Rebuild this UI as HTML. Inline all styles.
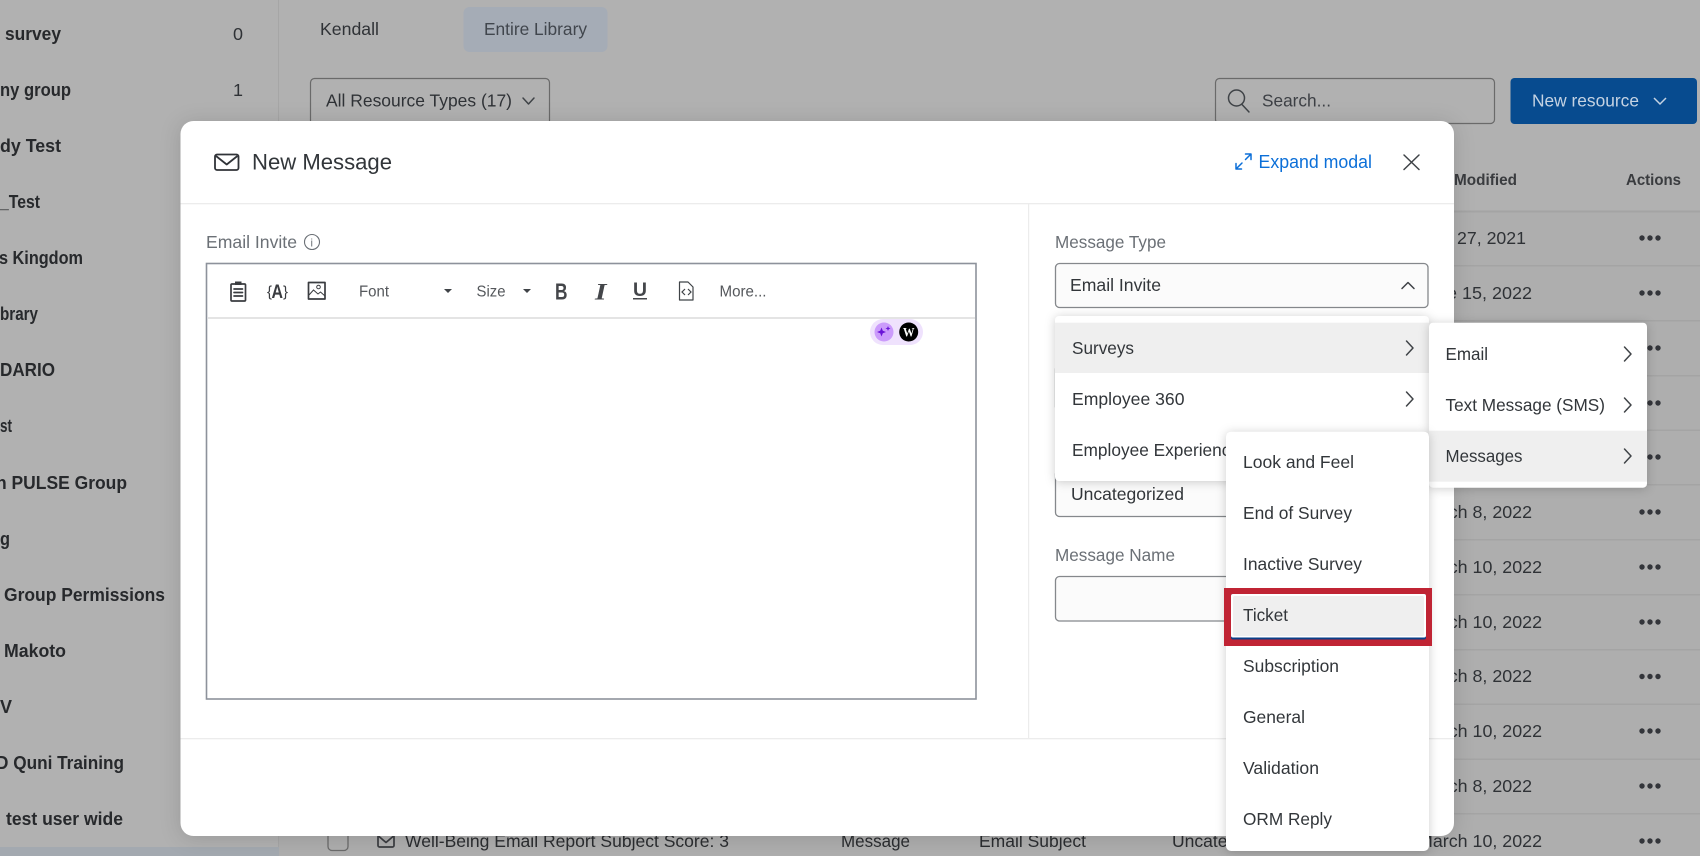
<!DOCTYPE html>
<html><head><meta charset="utf-8"><title>New Message</title>
<style>
html,body{margin:0;padding:0;width:1700px;height:856px;overflow:hidden;background:#b1b1b1}
svg{display:block;filter:blur(.3px)}
text{font-family:"Liberation Sans",sans-serif;white-space:pre}
.b{font-weight:700;font-size:18px;fill:#27292c}
.t{font-size:17.5px;fill:#2f3236}
.bg{font-size:17.5px;fill:#2b2d30}
.h{font-weight:700;font-size:15.5px;fill:#3a3c3f}
.l{font-size:17.5px;fill:#6b7076}
.m{font-size:17.5px;fill:#32363a}
.tb{font-size:15.5px;fill:#55585c}
.i{fill:none;stroke:#3a3c40;stroke-width:1.7;stroke-linecap:round;stroke-linejoin:round}
.c{fill:none;stroke:#3f4347;stroke-width:1.5;stroke-linecap:round;stroke-linejoin:round}
.d{fill:#33353a}
.ln{fill:#a4a4a4}
.sh{filter:drop-shadow(0 1px 5px rgba(0,0,0,.2))}
</style></head><body>
<svg width="1700" height="856" viewBox="0 0 1700 856" xmlns="http://www.w3.org/2000/svg">
<rect width="1700" height="856" fill="#b1b1b1"/>
<rect x="279" y="212" width="1421" height="644" fill="#aeaeae"/>
<rect x="278" y="0" width="1" height="856" fill="#a6a6a6"/>
<rect x="0" y="847" width="279" height="9" fill="#a3a9b0"/>

<!-- sidebar -->
<text class="b" x="5" y="40" textLength="56" lengthAdjust="spacingAndGlyphs">survey</text>
<text class="b" x="0" y="96" textLength="71" lengthAdjust="spacingAndGlyphs">ny group</text>
<text class="b" x="0" y="152" textLength="61" lengthAdjust="spacingAndGlyphs">dy Test</text>
<text class="b" x="0" y="208" textLength="40" lengthAdjust="spacingAndGlyphs">_Test</text>
<text class="b" x="-1" y="264" textLength="84" lengthAdjust="spacingAndGlyphs">s Kingdom</text>
<text class="b" x="0" y="320" textLength="38" lengthAdjust="spacingAndGlyphs">brary</text>
<text class="b" x="0" y="376" textLength="55" lengthAdjust="spacingAndGlyphs">DARIO</text>
<text class="b" x="0" y="432" textLength="12" lengthAdjust="spacingAndGlyphs">st</text>
<text class="b" x="-4" y="489" textLength="131" lengthAdjust="spacingAndGlyphs">n PULSE Group</text>
<text class="b" x="0" y="545" textLength="10" lengthAdjust="spacingAndGlyphs">g</text>
<text class="b" x="4" y="601" textLength="161" lengthAdjust="spacingAndGlyphs">Group Permissions</text>
<text class="b" x="4" y="657" textLength="62" lengthAdjust="spacingAndGlyphs">Makoto</text>
<text class="b" x="0" y="713" textLength="12" lengthAdjust="spacingAndGlyphs">V</text>
<text class="b" x="-4" y="769" textLength="128" lengthAdjust="spacingAndGlyphs">D Quni Training</text>
<text class="b" x="6" y="825" textLength="117" lengthAdjust="spacingAndGlyphs">test user wide</text>
<text class="t" x="233" y="40" textLength="10" lengthAdjust="spacingAndGlyphs" fill="#4a4c50">0</text>
<text class="t" x="233" y="96" textLength="10" lengthAdjust="spacingAndGlyphs">1</text>

<!-- top tabs -->
<text class="t" x="320" y="35" textLength="59" lengthAdjust="spacingAndGlyphs">Kendall</text>
<rect x="463.500" y="7" width="144" height="45" rx="6" fill="#a5acb6"/>
<text class="t" x="484" y="35" textLength="103" lengthAdjust="spacingAndGlyphs" style="fill:#41464d">Entire Library</text>

<!-- filter -->
<rect x="310.500" y="78.500" width="239" height="60" rx="4" fill="none" stroke="#6a6a6a" stroke-width="1.200"/>
<text class="t" x="326" y="106.500" textLength="186" lengthAdjust="spacingAndGlyphs">All Resource Types (17)</text>
<path class="c" d="M523 98l5.500 6 5.500-6"/>

<!-- search -->
<rect x="1215.500" y="78.500" width="279" height="45" rx="4" fill="none" stroke="#6a6a6a" stroke-width="1.200"/>
<circle cx="1236.500" cy="98" r="8" class="c"/>
<path class="c" d="M1242 104.500l7 7.500"/>
<text class="t" x="1262" y="106.500" textLength="69" lengthAdjust="spacingAndGlyphs" style="fill:#3d4045">Search...</text>

<!-- new resource -->
<rect x="1510.500" y="78" width="186.500" height="46" rx="4" fill="#074b8f"/>
<text class="t" x="1532" y="106.500" textLength="107" lengthAdjust="spacingAndGlyphs" style="fill:#c5d3e3">New resource</text>
<path d="M1654 98l6 6 6-6" fill="none" stroke="#c5d3e3" stroke-width="1.500"/>

<!-- table head -->
<text class="h" x="1454" y="185" textLength="63" lengthAdjust="spacingAndGlyphs">Modified</text>
<text class="h" x="1626" y="185" textLength="55" lengthAdjust="spacingAndGlyphs">Actions</text>
<rect class="ln" x="1340" y="210.500" width="360" height="2"/>
<rect class="ln" x="1340" y="265" width="360" height="1.500"/>
<rect class="ln" x="1340" y="320" width="360" height="1.500"/>
<rect class="ln" x="1340" y="375" width="360" height="1.500"/>
<rect class="ln" x="1340" y="429.500" width="360" height="1.500"/>
<rect class="ln" x="1340" y="484" width="360" height="1.500"/>
<rect class="ln" x="1340" y="539" width="360" height="1.500"/>
<rect class="ln" x="1340" y="594" width="360" height="1.500"/>
<rect class="ln" x="1340" y="649" width="360" height="1.500"/>
<rect class="ln" x="1340" y="703.500" width="360" height="1.500"/>
<rect class="ln" x="1340" y="758.500" width="360" height="1.500"/>
<rect class="ln" x="1340" y="813" width="360" height="1.500"/>

<!-- dates -->
<text class="t" x="1457" y="244" textLength="69" lengthAdjust="spacingAndGlyphs">27, 2021</text>
<text class="t" x="1418" y="299" textLength="114" lengthAdjust="spacingAndGlyphs">June 15, 2022</text>
<text class="t" x="1418" y="518" textLength="114" lengthAdjust="spacingAndGlyphs">March 8, 2022</text>
<text class="t" x="1418" y="573" textLength="124" lengthAdjust="spacingAndGlyphs">March 10, 2022</text>
<text class="t" x="1418" y="628" textLength="124" lengthAdjust="spacingAndGlyphs">March 10, 2022</text>
<text class="t" x="1418" y="682" textLength="114" lengthAdjust="spacingAndGlyphs">March 8, 2022</text>
<text class="t" x="1418" y="737" textLength="124" lengthAdjust="spacingAndGlyphs">March 10, 2022</text>
<text class="t" x="1418" y="792" textLength="114" lengthAdjust="spacingAndGlyphs">March 8, 2022</text>
<text class="t" x="1418" y="847" textLength="124" lengthAdjust="spacingAndGlyphs">March 10, 2022</text>

<!-- dots -->
<g class="d">
<circle cx="1642" cy="238" r="2.700"/><circle cx="1650" cy="238" r="2.700"/><circle cx="1658" cy="238" r="2.700"/>
<circle cx="1642" cy="293" r="2.700"/><circle cx="1650" cy="293" r="2.700"/><circle cx="1658" cy="293" r="2.700"/>
<circle cx="1642" cy="348" r="2.700"/><circle cx="1650" cy="348" r="2.700"/><circle cx="1658" cy="348" r="2.700"/>
<circle cx="1642" cy="403" r="2.700"/><circle cx="1650" cy="403" r="2.700"/><circle cx="1658" cy="403" r="2.700"/>
<circle cx="1642" cy="457" r="2.700"/><circle cx="1650" cy="457" r="2.700"/><circle cx="1658" cy="457" r="2.700"/>
<circle cx="1642" cy="512" r="2.700"/><circle cx="1650" cy="512" r="2.700"/><circle cx="1658" cy="512" r="2.700"/>
<circle cx="1642" cy="567" r="2.700"/><circle cx="1650" cy="567" r="2.700"/><circle cx="1658" cy="567" r="2.700"/>
<circle cx="1642" cy="622" r="2.700"/><circle cx="1650" cy="622" r="2.700"/><circle cx="1658" cy="622" r="2.700"/>
<circle cx="1642" cy="676.500" r="2.700"/><circle cx="1650" cy="676.500" r="2.700"/><circle cx="1658" cy="676.500" r="2.700"/>
<circle cx="1642" cy="731" r="2.700"/><circle cx="1650" cy="731" r="2.700"/><circle cx="1658" cy="731" r="2.700"/>
<circle cx="1642" cy="786" r="2.700"/><circle cx="1650" cy="786" r="2.700"/><circle cx="1658" cy="786" r="2.700"/>
<circle cx="1642" cy="841" r="2.700"/><circle cx="1650" cy="841" r="2.700"/><circle cx="1658" cy="841" r="2.700"/>
</g>

<!-- bottom row -->
<rect x="328" y="829" width="20" height="21.500" rx="4" fill="none" stroke="#6b6b6b" stroke-width="1.300"/>
<rect x="378" y="835" width="16" height="12" rx="1.500" class="i"/>
<path class="i" d="M379 836.500l7 6 7-6"/>
<text class="bg" x="405" y="847" textLength="324" lengthAdjust="spacingAndGlyphs">Well-Being Email Report Subject Score: 3</text>
<text class="bg" x="841" y="847" textLength="69" lengthAdjust="spacingAndGlyphs">Message</text>
<text class="bg" x="979" y="847" textLength="107" lengthAdjust="spacingAndGlyphs">Email Subject</text>
<text class="bg" x="1172" y="847" textLength="113" lengthAdjust="spacingAndGlyphs">Uncategorized</text>

<!-- modal -->
<rect x="180.500" y="121" width="1273.500" height="715" rx="13" fill="#fff" style="filter:drop-shadow(0 2px 10px rgba(0,0,0,.14))"/>
<rect x="180.500" y="203" width="1273.500" height="1.300" fill="#ececec"/>
<rect x="1028" y="203" width="1.200" height="535" fill="#ececec"/>
<rect x="180.500" y="738" width="1273.500" height="1.300" fill="#ececec"/>

<!-- header -->
<rect x="215" y="154.500" width="23.500" height="15.500" rx="2" fill="none" stroke="#303338" stroke-width="1.800"/>
<path d="M216 156l10.700 8.500 10.700-8.500" fill="none" stroke="#303338" stroke-width="1.800" stroke-linejoin="round"/>
<text x="252" y="169.500" font-size="22.500" fill="#32363a" textLength="140" lengthAdjust="spacingAndGlyphs">New Message</text>
<path d="M1236 169l6-6M1245.500 159.500l5.500-5.500M1245.500 154h5.500v5.500M1236 163.500v5.500h5.500" fill="none" stroke="#0b6fd8" stroke-width="1.500" stroke-linecap="round" stroke-linejoin="round"/>
<text x="1258.500" y="168" font-size="18" fill="#0b6fd8" textLength="113.500" lengthAdjust="spacingAndGlyphs">Expand modal</text>
<path d="M1404 155l15 14.500M1419 155l-15 14.500" fill="none" stroke="#3f4347" stroke-width="1.500" stroke-linecap="round"/>

<!-- editor -->
<text class="l" x="206" y="248" textLength="91" lengthAdjust="spacingAndGlyphs">Email Invite</text>
<circle cx="312" cy="242" r="7.500" fill="none" stroke="#6b7076" stroke-width="1.100"/>
<text x="310.500" y="246.500" font-size="11" fill="#6b7076">i</text>
<rect x="206.500" y="263.500" width="769.500" height="435.500" fill="#fff" stroke="#8d929b" stroke-width="1.600"/>
<rect x="208" y="317" width="767" height="2" fill="#e4e4e4"/>

<!-- clipboard -->
<rect x="231" y="284" width="14.500" height="17" rx="1" class="i" stroke-width="1.500"/>
<rect x="235" y="281.500" width="6.500" height="3.500" fill="#3a3c40"/>
<path class="i" d="M234 289h8.500M234 292.500h8.500M234 296h8.500"/>
<!-- {A} -->
<text x="267" y="296.500" font-size="15" fill="#3a3c40" textLength="5" lengthAdjust="spacingAndGlyphs">{</text>
<text x="271.500" y="298" font-size="19" font-weight="700" fill="#3a3c40" textLength="11.500" lengthAdjust="spacingAndGlyphs">A</text>
<text x="283" y="296.500" font-size="15" fill="#3a3c40" textLength="5" lengthAdjust="spacingAndGlyphs">}</text>
<!-- image -->
<rect x="308.500" y="282.500" width="16.500" height="16.500" class="i" stroke-width="1.400"/>
<circle cx="318.500" cy="287" r="1.800" fill="none" stroke="#3a3c40" stroke-width="1"/>
<path d="M309 295l4.500-5 4.500 4 2.500-2 4.500 4" fill="none" stroke="#3a3c40" stroke-width="1"/>

<text class="tb" x="359" y="296.500" textLength="30" lengthAdjust="spacingAndGlyphs">Font</text>
<path d="M444 289h8l-4 4z" fill="#3f4347"/>
<text class="tb" x="476.500" y="296.500" textLength="29" lengthAdjust="spacingAndGlyphs">Size</text>
<path d="M523 289h8l-4 4z" fill="#3f4347"/>
<text x="555" y="299.500" font-size="23" font-weight="700" fill="#44464a" textLength="12.500" lengthAdjust="spacingAndGlyphs">B</text>
<text x="595" y="299.500" font-size="23" font-weight="700" font-style="italic" fill="#44464a" style="font-family:'Liberation Serif',serif" textLength="11.500" lengthAdjust="spacingAndGlyphs">I</text>
<text x="633" y="296" font-size="19" font-weight="700" fill="#44464a" textLength="14" lengthAdjust="spacingAndGlyphs">U</text>
<rect x="633" y="298" width="14" height="1.500" fill="#44464a"/>
<path d="M679.500 282h8.500l5 5v13h-13.500z" fill="none" stroke="#3f4347" stroke-width="1.200" stroke-linejoin="round"/>
<path d="M685 289l-3 3 3 3M688 289l3 3-3 3" fill="none" stroke="#3f4347" stroke-width="1.200"/>
<text class="tb" x="719.500" y="296.500" textLength="47" lengthAdjust="spacingAndGlyphs">More...</text>

<!-- badge -->
<rect x="870" y="319" width="53" height="26" rx="13" fill="#efe2fd"/>
<circle cx="884" cy="332" r="9.500" fill="#cb9bfb"/>
<path d="M881.500 327.500l1.300 3.200 3.200 1.300-3.200 1.300-1.300 3.200-1.300-3.200-3.200-1.300 3.200-1.300zM888 326l.7 1.800 1.800.7-1.800.7-.7 1.800-.7-1.800-1.800-.7 1.800-.7z" fill="#6a14d8"/>
<circle cx="908.700" cy="332" r="9.500" fill="#000"/>
<text x="903" y="336.500" font-size="12.500" font-weight="700" fill="#fff" style="font-family:'Liberation Serif',serif" textLength="11.500" lengthAdjust="spacingAndGlyphs">W</text>

<!-- right fields -->
<text class="l" x="1055" y="248" textLength="111" lengthAdjust="spacingAndGlyphs">Message Type</text>
<rect x="1055.500" y="263.500" width="372.500" height="44" rx="4" fill="#fbfbfb" stroke="#85888c" stroke-width="1.300"/>
<text class="m" x="1070" y="291" textLength="91" lengthAdjust="spacingAndGlyphs">Email Invite</text>
<path class="c" d="M1402 288.500l6-6 6 6"/>

<rect x="1055.500" y="365" width="100" height="46" rx="4" fill="#fbfbfb" stroke="#85888c" stroke-width="1.300"/>
<rect x="1055.500" y="470" width="372.500" height="46.500" rx="4" fill="#fbfbfb" stroke="#85888c" stroke-width="1.300"/>
<text class="m" x="1071" y="500" textLength="113" lengthAdjust="spacingAndGlyphs">Uncategorized</text>
<text class="l" x="1055" y="561" textLength="120" lengthAdjust="spacingAndGlyphs">Message Name</text>
<rect x="1055.500" y="576.500" width="372.500" height="44.500" rx="4" fill="#fbfbfb" stroke="#85888c" stroke-width="1.300"/>

<!-- menu 1 -->
<rect x="1055" y="316" width="374" height="165" rx="4" fill="#fff" class="sh"/>
<rect x="1055" y="322.700" width="374" height="50.300" fill="#efefef"/>
<text class="m" x="1072" y="354" textLength="62" lengthAdjust="spacingAndGlyphs">Surveys</text>
<path class="c" d="M1406.500 341l6.500 7-6.500 7"/>
<text class="m" x="1072" y="405" textLength="112.500" lengthAdjust="spacingAndGlyphs">Employee 360</text>
<path class="c" d="M1406.500 392l6.500 7-6.500 7"/>
<text class="m" x="1072" y="456" textLength="168" lengthAdjust="spacingAndGlyphs">Employee Experience</text>

<!-- menu 2 -->
<rect x="1429" y="322.700" width="218" height="165" rx="4" fill="#fff" class="sh"/>
<rect x="1429" y="430.700" width="218" height="51" fill="#efefef"/>
<text class="m" x="1445.500" y="360" textLength="42.500" lengthAdjust="spacingAndGlyphs">Email</text>
<path class="c" d="M1624.500 347l6.500 7-6.500 7"/>
<text class="m" x="1445.500" y="411" textLength="159.500" lengthAdjust="spacingAndGlyphs">Text Message (SMS)</text>
<path class="c" d="M1624.500 398l6.500 7-6.500 7"/>
<text class="m" x="1445.500" y="462" textLength="77" lengthAdjust="spacingAndGlyphs">Messages</text>
<path class="c" d="M1624.500 449l6.500 7-6.500 7"/>

<!-- menu 3 -->
<rect x="1226" y="431.700" width="203" height="419.300" rx="5" fill="#fff" class="sh"/>
<text class="m" x="1243" y="468" textLength="111" lengthAdjust="spacingAndGlyphs">Look and Feel</text>
<text class="m" x="1243" y="519" textLength="109" lengthAdjust="spacingAndGlyphs">End of Survey</text>
<text class="m" x="1243" y="570" textLength="119" lengthAdjust="spacingAndGlyphs">Inactive Survey</text>

<rect x="1224" y="588" width="208" height="58" fill="#c02434"/>
<rect x="1231" y="594" width="195" height="45.500" rx="2" fill="#0a3f88"/>
<rect x="1231" y="594" width="195" height="43.500" rx="2" fill="#fff"/>
<rect x="1233" y="596" width="191" height="40" rx="2" fill="#efefef"/>
<text class="m" x="1243" y="621" textLength="45" lengthAdjust="spacingAndGlyphs">Ticket</text>

<text class="m" x="1243" y="672" textLength="96" lengthAdjust="spacingAndGlyphs">Subscription</text>
<text class="m" x="1243" y="723" textLength="62" lengthAdjust="spacingAndGlyphs">General</text>
<text class="m" x="1243" y="774" textLength="76" lengthAdjust="spacingAndGlyphs">Validation</text>
<text class="m" x="1243" y="825" textLength="89" lengthAdjust="spacingAndGlyphs">ORM Reply</text>
</svg>
</body></html>
